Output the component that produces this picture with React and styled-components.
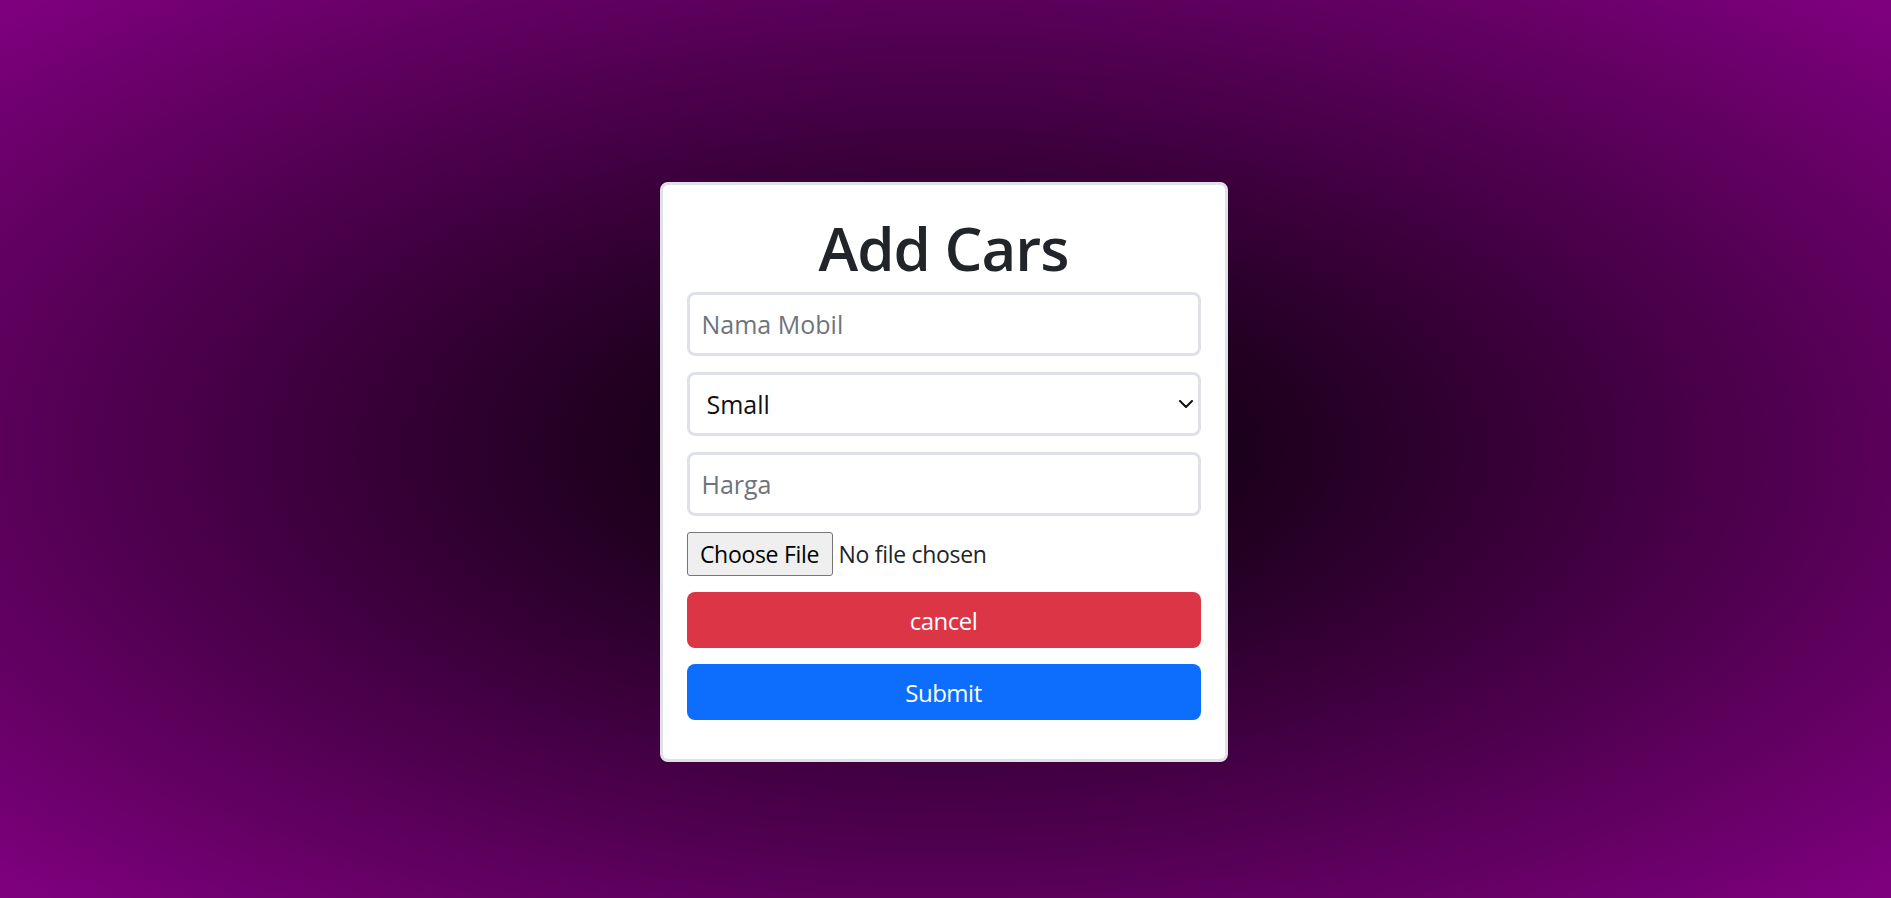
import React from "react";
import styled, { createGlobalStyle } from "styled-components";

const GlobalStyle = createGlobalStyle`
  html, body {
    margin: 0;
    padding: 0;
  }
  body {
    min-height: 100vh;
    background: radial-gradient(ellipse at center, #000000 0%, #800080 100%);
    background-attachment: fixed;
    font-family: "Open Sans", "Noto Sans", sans-serif;
    color: #212529;
  }
  *, *::before, *::after {
    box-sizing: border-box;
  }
`;

const Page = styled.main`
  min-height: 100vh;
  display: flex;
  justify-content: center;
  align-items: flex-start;
  padding: 182px 4px 0 0;
`;

const Card = styled.section`
  width: 568px;
  background: #ffffff;
  border: 3px solid #dee2e6;
  border-radius: 8px;
  padding: 27px 24px 39px;
`;

const Title = styled.h1`
  margin: 0 0 8px;
  font-size: 60px;
  line-height: 72px;
  font-weight: 600;
  letter-spacing: -1px;
  text-align: center;
  color: #212529;
`;

const Form = styled.form`
  display: flex;
  flex-direction: column;
  gap: 16px;
`;

const fieldBase = `
  width: 100%;
  height: 64px;
  border: 3px solid #dee2e6;
  border-radius: 8px;
  background: #ffffff;
  font-family: "Open Sans", "Noto Sans", sans-serif;
  font-size: 25px;
  color: #212529;
  outline: none;
`;

const TextInput = styled.input`
  ${fieldBase}
  padding: 0 12px;
  &::placeholder {
    color: #6c757d;
    opacity: 1;
  }
`;

const SelectWrap = styled.div`
  position: relative;
  width: 100%;
`;

const Select = styled.select`
  ${fieldBase}
  appearance: none;
  -webkit-appearance: none;
  padding: 0 40px 0 17px;
  color: #111111;
`;

const Chevron = styled.svg`
  position: absolute;
  right: 8px;
  top: 50%;
  transform: translateY(-50%);
  width: 14px;
  height: 8px;
  pointer-events: none;
`;

const FileRow = styled.div`
  display: flex;
  align-items: center;
  gap: 6px;
  height: 44px;
`;

const FileButton = styled.button`
  height: 44px;
  width: 146px;
  padding: 0;
  background: #efefef;
  border: 1px solid #767676;
  border-radius: 3px;
  font-family: "Open Sans", "Noto Sans", sans-serif;
  font-size: 23px;
  letter-spacing: -0.3px;
  color: #000000;
`;

const FileStatus = styled.span`
  font-size: 23px;
  letter-spacing: -0.3px;
  color: #212529;
`;

const ActionButton = styled.button`
  width: 100%;
  height: 56px;
  border: none;
  border-radius: 8px;
  background: ${(p) => (p.$variant === "danger" ? "#dc3545" : "#0d6efd")};
  color: #ffffff;
  font-family: "Open Sans", "Noto Sans", sans-serif;
  font-size: 24px;
  letter-spacing: -0.5px;
`;

export default function App() {
  return (
    <>
      <GlobalStyle />
      <Page>
        <Card>
          <Title>Add Cars</Title>
          <Form onSubmit={(e) => e.preventDefault()}>
            <TextInput type="text" placeholder="Nama Mobil" />
            <SelectWrap>
              <Select defaultValue="small">
                <option value="small">Small</option>
                <option value="medium">Medium</option>
                <option value="large">Large</option>
              </Select>
              <Chevron viewBox="0 0 14 8" fill="none">
                <path d="M1 1 L7 7 L13 1" stroke="#111" strokeWidth="2" strokeLinecap="round" strokeLinejoin="round" />
              </Chevron>
            </SelectWrap>
            <TextInput type="text" placeholder="Harga" />
            <FileRow>
              <FileButton type="button">Choose File</FileButton>
              <FileStatus>No file chosen</FileStatus>
            </FileRow>
            <ActionButton type="button" $variant="danger">cancel</ActionButton>
            <ActionButton type="submit" $variant="primary">Submit</ActionButton>
          </Form>
        </Card>
      </Page>
    </>
  );
}
